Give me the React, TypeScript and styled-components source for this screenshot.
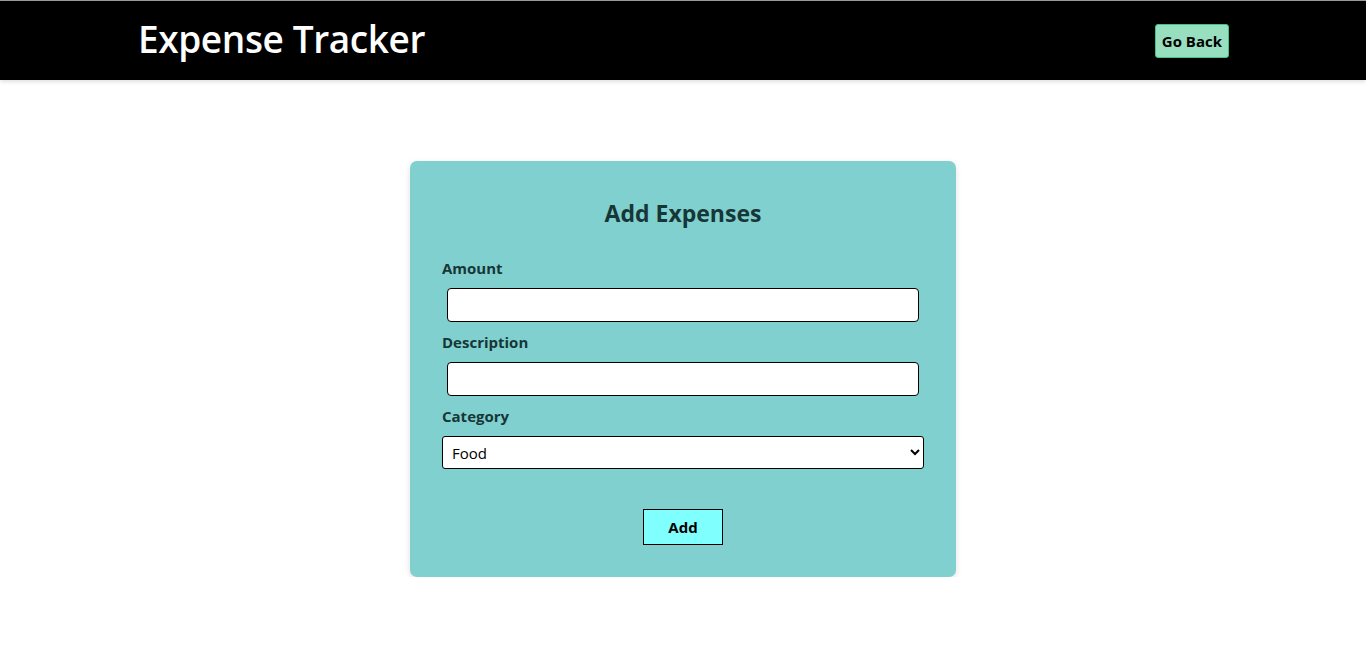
import styled, { createGlobalStyle } from "styled-components";

const GlobalStyle = createGlobalStyle`
  body {
    margin: 0;
    background: #ffffff;
    font-family: "Open Sans", "Noto Sans", sans-serif;
  }
`;

const App = () => {
  return (
    <>
      <GlobalStyle />
      <Header>
        <Title>Expense Tracker</Title>
        <BackButton>Go Back</BackButton>
      </Header>
      <Main>
        <Card>
          <CardTitle>Add Expenses</CardTitle>
          <Label>Amount</Label>
          <Input type="number" />
          <Label>Description</Label>
          <Input type="text" />
          <Label>Category</Label>
          <Select defaultValue="Food">
            <option>Food</option>
            <option>Travel</option>
            <option>Shopping</option>
            <option>Bills</option>
          </Select>
          <AddButton>Add</AddButton>
        </Card>
      </Main>
    </>
  );
};

export default App;

const Header = styled.header`
  height: 79px;
  border-top: 1px solid #9a9a9a;
  background: #000;
  display: flex;
  align-items: center;
  justify-content: space-between;
  padding: 0 137px 0 138px;
  box-shadow: 0 2px 4px rgba(0, 0, 0, 0.12);
`;
const Title = styled.h1`
  margin: 0 0 4px;
  color: #fff;
  font-size: 37px;
  font-weight: 600;
  letter-spacing: -0.4px;
`;
const BackButton = styled.button`
  height: 34px;
  padding: 0 6px;
  margin-top: 1px;
  background: #98dfc0;
  border: 1px solid #3fc48a;
  border-radius: 3px;
  font-family: inherit;
  font-size: 15px;
  font-weight: 700;
  color: #000;
`;
const Main = styled.main`
  display: flex;
  justify-content: center;
  padding-top: 81px;
`;
const Card = styled.div`
  width: 482px;
  padding: 36px 32px 32px;
  background: #81d0d0;
  border-radius: 7px;
  box-shadow: 0 2px 6px rgba(0, 0, 0, 0.12);
  display: flex;
  flex-direction: column;
`;
const CardTitle = styled.h2`
  margin: 0 0 29px;
  text-align: center;
  font-size: 23px;
  line-height: 32px;
  font-weight: 700;
  color: #173636;
`;
const Label = styled.label`
  font-size: 15px;
  line-height: 20px;
  font-weight: 700;
  color: #173636;
  margin-bottom: 10px;
`;
const Input = styled.input`
  box-sizing: border-box;
  width: calc(100% - 10px);
  height: 34px;
  margin: 0 5px 10px;
  border: 1px solid #000;
  border-radius: 4px;
  background: #fff;
`;
const Select = styled.select`
  box-sizing: border-box;
  width: 100%;
  height: 33px;
  padding: 0 5px;
  border: 1px solid #000;
  border-radius: 3px;
  background: #fff;
  font-family: inherit;
  font-size: 15px;
  color: #000;
`;
const AddButton = styled.button`
  align-self: center;
  width: 80px;
  height: 36px;
  margin-top: 40px;
  background: #80ffff;
  border: 1px solid #000;
  font-family: inherit;
  font-size: 15px;
  font-weight: 700;
  color: #000;
`;
